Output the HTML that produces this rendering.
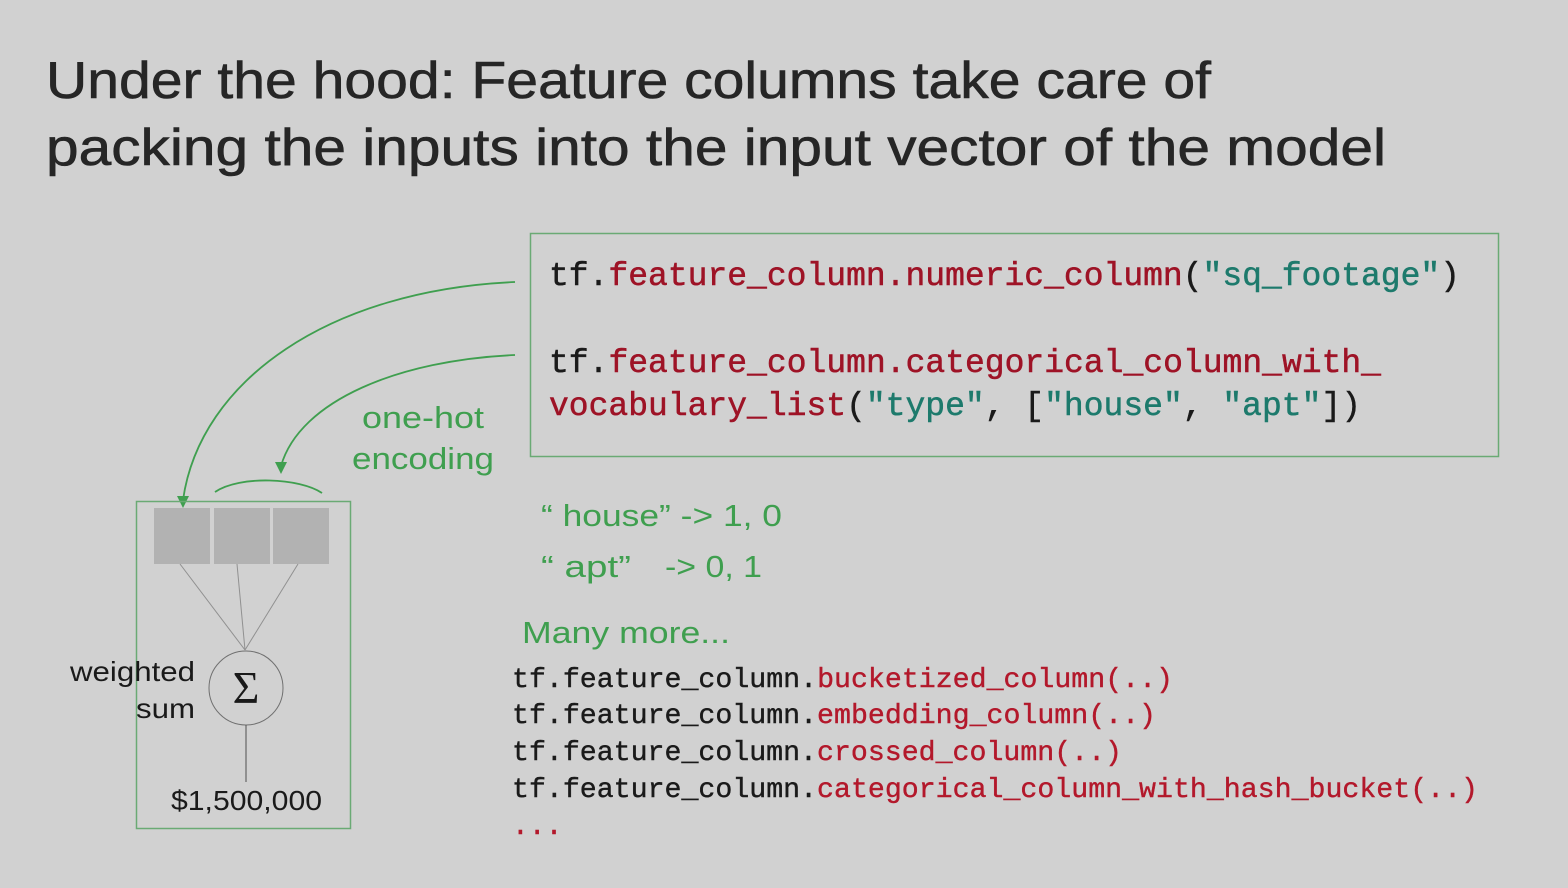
<!DOCTYPE html>
<html><head><meta charset="utf-8"><style>
html,body{margin:0;padding:0;background:#d1d1d1;}
svg{display:block}
.t{font-family:"Liberation Sans",sans-serif;}
.m{font-family:"Liberation Mono",monospace;}
</style></head><body>
<svg width="1568" height="888" viewBox="0 0 1568 888" xmlns="http://www.w3.org/2000/svg">
<rect width="1568" height="888" fill="#d1d1d1"/>
<text class="t" x="46" y="98" font-size="52" fill="#262626" stroke="#262626" stroke-width="0.6" textLength="1165" lengthAdjust="spacingAndGlyphs">Under the hood: Feature columns take care of</text>
<text class="t" x="46" y="165" font-size="52" fill="#262626" stroke="#262626" stroke-width="0.6" textLength="1340" lengthAdjust="spacingAndGlyphs">packing the inputs into the input vector of the model</text>

<rect x="530.5" y="233.5" width="968" height="223" fill="none" stroke="#6aaa74" stroke-width="1.5"/>
<g class="m" font-size="33" stroke-width="0.5">
<text x="549" y="285" textLength="911" lengthAdjust="spacingAndGlyphs"><tspan fill="#1a1a1a" stroke="#1a1a1a">tf.</tspan><tspan fill="#9e1326" stroke="#9e1326">feature_column.numeric_column</tspan><tspan fill="#1a1a1a" stroke="#1a1a1a">(</tspan><tspan fill="#1d7a6c" stroke="#1d7a6c">"sq_footage"</tspan><tspan fill="#1a1a1a" stroke="#1a1a1a">)</tspan></text>
<text x="549" y="372" textLength="832" lengthAdjust="spacingAndGlyphs"><tspan fill="#1a1a1a" stroke="#1a1a1a">tf.</tspan><tspan fill="#9e1326" stroke="#9e1326">feature_column.categorical_column_with_</tspan></text>
<text x="549" y="415" textLength="812" lengthAdjust="spacingAndGlyphs"><tspan fill="#9e1326" stroke="#9e1326">vocabulary_list</tspan><tspan fill="#1a1a1a" stroke="#1a1a1a">(</tspan><tspan fill="#1d7a6c" stroke="#1d7a6c">"type"</tspan><tspan fill="#1a1a1a" stroke="#1a1a1a">, [</tspan><tspan fill="#1d7a6c" stroke="#1d7a6c">"house"</tspan><tspan fill="#1a1a1a" stroke="#1a1a1a">, </tspan><tspan fill="#1d7a6c" stroke="#1d7a6c">"apt"</tspan><tspan fill="#1a1a1a" stroke="#1a1a1a">])</tspan></text>
</g>

<g fill="none" stroke="#3f9f4f" stroke-width="1.8">
<path d="M515 282 C 330 290, 200 380, 183 500"/>
<path d="M515 355 C 400 360, 300 400, 281 466"/>
<path d="M215 492 C 240 475, 300 478, 322 493"/>
</g>
<path d="M177 496 L183 508 L189 496 Z" fill="#3f9f4f"/>
<path d="M275 462 L281 474 L287 462 Z" fill="#3f9f4f"/>

<g class="t" fill="#3f9f4f" font-size="31">
<text x="362" y="428" textLength="122" lengthAdjust="spacingAndGlyphs">one-hot</text>
<text x="352" y="469" textLength="142" lengthAdjust="spacingAndGlyphs">encoding</text>
<text x="541" y="526" textLength="241" lengthAdjust="spacingAndGlyphs">“ house” -&gt; 1, 0</text>
<text x="541" y="577" textLength="90" lengthAdjust="spacingAndGlyphs">“ apt”</text>
<text x="665" y="577" textLength="97" lengthAdjust="spacingAndGlyphs">-&gt; 0, 1</text>
<text x="522" y="643" textLength="208" lengthAdjust="spacingAndGlyphs">Many more...</text>
</g>

<rect x="136.5" y="501.5" width="214" height="327" fill="none" stroke="#6aaa74" stroke-width="1.5"/>
<rect x="154" y="508" width="56" height="56" fill="#b2b2b2"/>
<rect x="214" y="508" width="56" height="56" fill="#b2b2b2"/>
<rect x="273" y="508" width="56" height="56" fill="#b2b2b2"/>
<g stroke="#909090" stroke-width="1" fill="none">
<line x1="180" y1="564" x2="245" y2="650"/>
<line x1="237" y1="564" x2="245" y2="650"/>
<line x1="298" y1="564" x2="245" y2="650"/>
<circle cx="246" cy="688" r="37" stroke="#707070"/>
<line x1="246" y1="725" x2="246" y2="782" stroke="#505050"/>
</g>
<text x="246" y="703" text-anchor="middle" font-family="Liberation Serif,serif" font-size="46" fill="#1a1a1a">Σ</text>
<g class="t" font-size="28" fill="#1a1a1a">
<text x="70" y="681" textLength="125" lengthAdjust="spacingAndGlyphs">weighted</text>
<text x="136" y="718" textLength="59" lengthAdjust="spacingAndGlyphs">sum</text>
<text x="171" y="810" textLength="151" lengthAdjust="spacingAndGlyphs">$1,500,000</text>
</g>

<g class="m" font-size="28" stroke-width="0.4">
<text x="512" y="687" textLength="661" lengthAdjust="spacingAndGlyphs"><tspan fill="#1a1a1a" stroke="#1a1a1a">tf.feature_column.</tspan><tspan fill="#b3182b" stroke="#b3182b">bucketized_column(..)</tspan></text>
<text x="512" y="723" textLength="644" lengthAdjust="spacingAndGlyphs"><tspan fill="#1a1a1a" stroke="#1a1a1a">tf.feature_column.</tspan><tspan fill="#b3182b" stroke="#b3182b">embedding_column(..)</tspan></text>
<text x="512" y="760" textLength="610" lengthAdjust="spacingAndGlyphs"><tspan fill="#1a1a1a" stroke="#1a1a1a">tf.feature_column.</tspan><tspan fill="#b3182b" stroke="#b3182b">crossed_column(..)</tspan></text>
<text x="512" y="797" textLength="966" lengthAdjust="spacingAndGlyphs"><tspan fill="#1a1a1a" stroke="#1a1a1a">tf.feature_column.</tspan><tspan fill="#b3182b" stroke="#b3182b">categorical_column_with_hash_bucket(..)</tspan></text>
<text x="512" y="834" fill="#b3182b" stroke="#b3182b">...</text>
</g>
</svg>
</body></html>
